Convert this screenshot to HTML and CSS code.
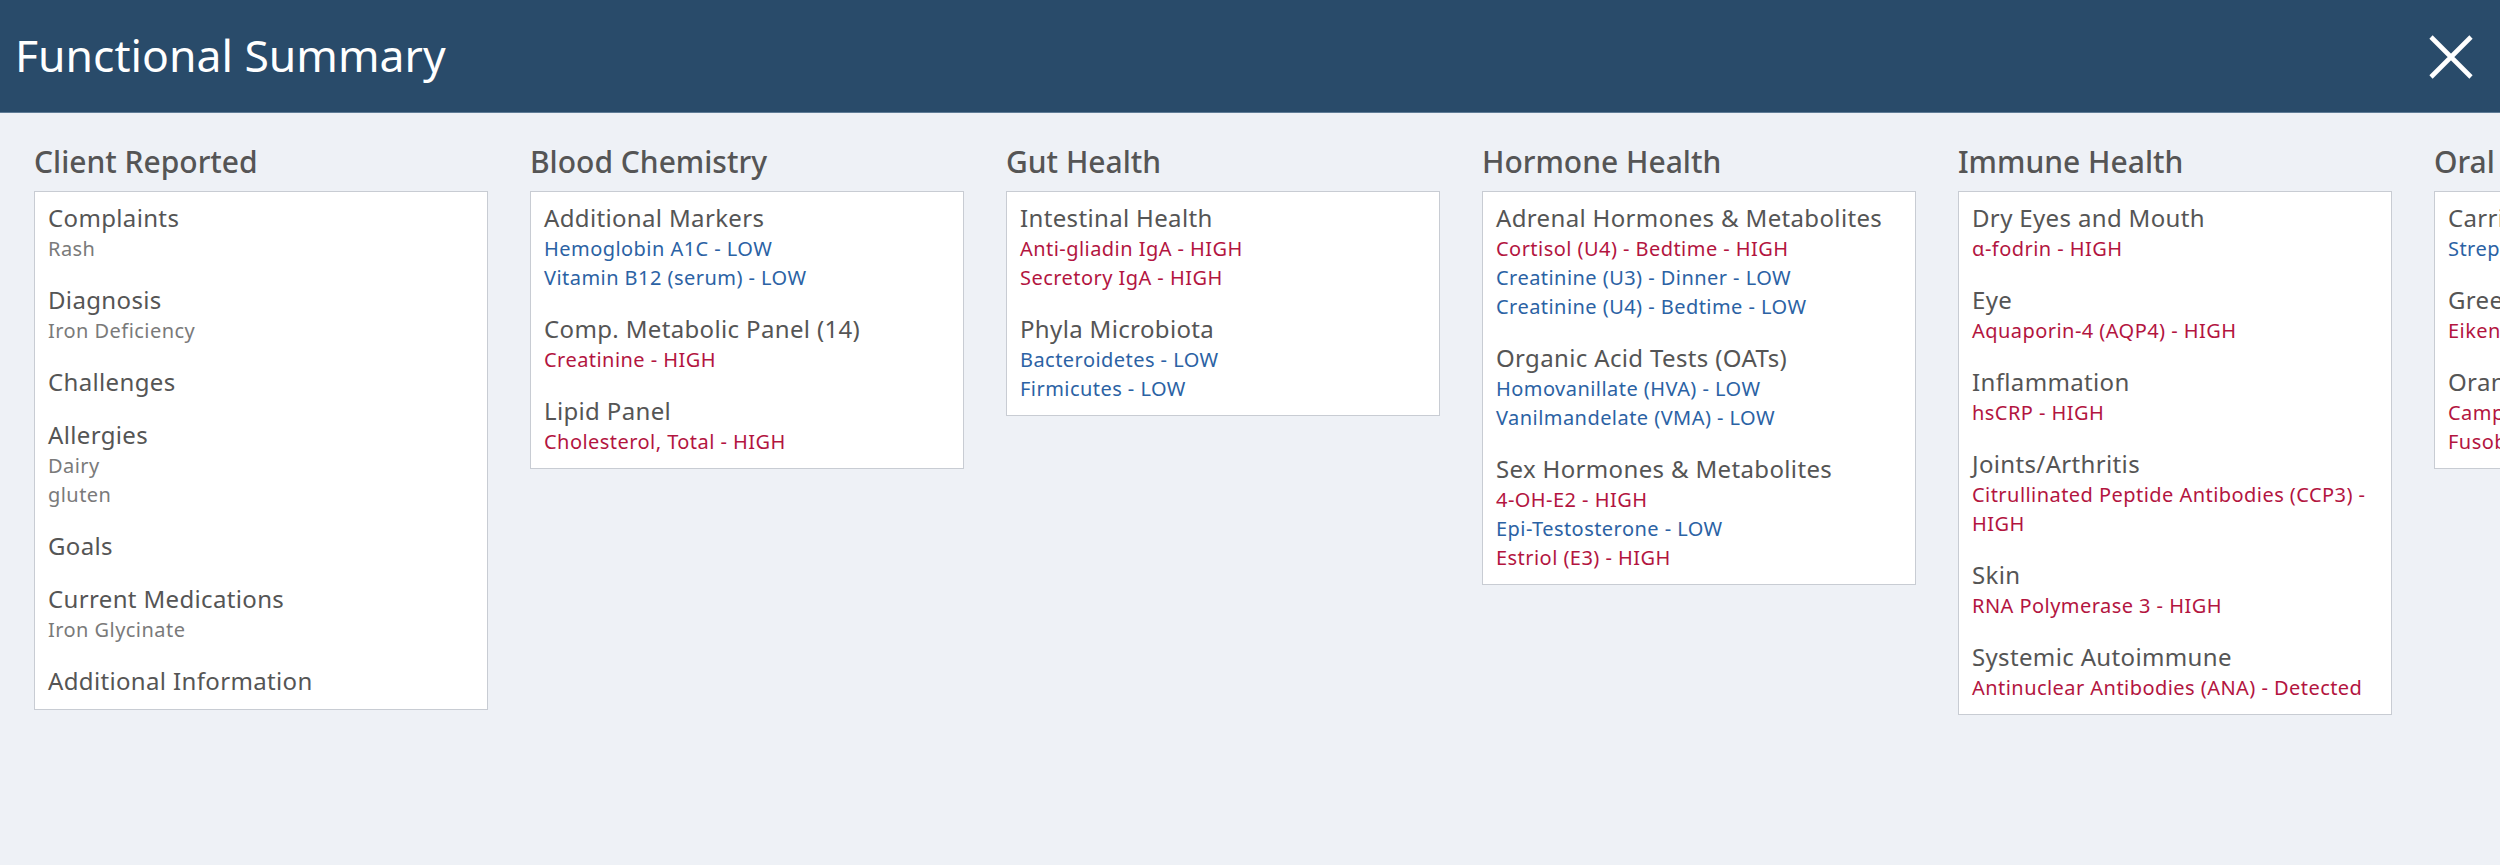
FILE: index.html
```html
<!DOCTYPE html>
<html>
<head>
<meta charset="utf-8">
<link rel="stylesheet" href="styles.css">
</head>
<body>
<header class="topbar">
  <h1 class="title">Functional Summary</h1>
  <button class="close" aria-label="Close">
    <svg width="46" height="46" viewBox="0 0 46 46"><path d="M3 3 L43 43 M43 3 L3 43" stroke="#fff" stroke-width="4.6" fill="none"/></svg>
  </button>
</header>
<main class="columns">
  <section class="col col-wide">
    <h2 class="col-title">Client Reported</h2>
    <div class="card">
      <div class="group"><div class="g-title">Complaints</div><div class="v muted">Rash</div></div>
      <div class="group"><div class="g-title">Diagnosis</div><div class="v muted">Iron Deficiency</div></div>
      <div class="group"><div class="g-title">Challenges</div></div>
      <div class="group"><div class="g-title">Allergies</div><div class="v muted">Dairy</div><div class="v muted">gluten</div></div>
      <div class="group"><div class="g-title">Goals</div></div>
      <div class="group"><div class="g-title">Current Medications</div><div class="v muted">Iron Glycinate</div></div>
      <div class="group"><div class="g-title">Additional Information</div></div>
    </div>
  </section>
  <section class="col">
    <h2 class="col-title">Blood Chemistry</h2>
    <div class="card">
      <div class="group"><div class="g-title">Additional Markers</div><div class="v low">Hemoglobin A1C - LOW</div><div class="v low">Vitamin B12 (serum) - LOW</div></div>
      <div class="group"><div class="g-title">Comp. Metabolic Panel (14)</div><div class="v high">Creatinine - HIGH</div></div>
      <div class="group"><div class="g-title">Lipid Panel</div><div class="v high">Cholesterol, Total - HIGH</div></div>
    </div>
  </section>
  <section class="col">
    <h2 class="col-title">Gut Health</h2>
    <div class="card">
      <div class="group"><div class="g-title">Intestinal Health</div><div class="v high">Anti-gliadin IgA - HIGH</div><div class="v high">Secretory IgA - HIGH</div></div>
      <div class="group"><div class="g-title">Phyla Microbiota</div><div class="v low">Bacteroidetes - LOW</div><div class="v low">Firmicutes - LOW</div></div>
    </div>
  </section>
  <section class="col">
    <h2 class="col-title">Hormone Health</h2>
    <div class="card">
      <div class="group"><div class="g-title">Adrenal Hormones &amp; Metabolites</div><div class="v high">Cortisol (U4) - Bedtime - HIGH</div><div class="v low">Creatinine (U3) - Dinner - LOW</div><div class="v low">Creatinine (U4) - Bedtime - LOW</div></div>
      <div class="group"><div class="g-title">Organic Acid Tests (OATs)</div><div class="v low">Homovanillate (HVA) - LOW</div><div class="v low">Vanilmandelate (VMA) - LOW</div></div>
      <div class="group"><div class="g-title">Sex Hormones &amp; Metabolites</div><div class="v high">4-OH-E2 - HIGH</div><div class="v low">Epi-Testosterone - LOW</div><div class="v high">Estriol (E3) - HIGH</div></div>
    </div>
  </section>
  <section class="col">
    <h2 class="col-title">Immune Health</h2>
    <div class="card">
      <div class="group"><div class="g-title">Dry Eyes and Mouth</div><div class="v high">α-fodrin - HIGH</div></div>
      <div class="group"><div class="g-title">Eye</div><div class="v high">Aquaporin-4 (AQP4) - HIGH</div></div>
      <div class="group"><div class="g-title">Inflammation</div><div class="v high">hsCRP - HIGH</div></div>
      <div class="group"><div class="g-title">Joints/Arthritis</div><div class="v high">Citrullinated Peptide Antibodies (CCP3) - HIGH</div></div>
      <div class="group"><div class="g-title">Skin</div><div class="v high">RNA Polymerase 3 - HIGH</div></div>
      <div class="group"><div class="g-title">Systemic Autoimmune</div><div class="v high">Antinuclear Antibodies (ANA) - Detected</div></div>
    </div>
  </section>
  <section class="col">
    <h2 class="col-title">Oral Health</h2>
    <div class="card">
      <div class="group"><div class="g-title">Carries Risk</div><div class="v low">Streptococcus mutans - LOW</div></div>
      <div class="group"><div class="g-title">Green Complex</div><div class="v high">Eikenella corrodens - HIGH</div></div>
      <div class="group"><div class="g-title">Orange Complex</div><div class="v high">Campylobacter rectus - HIGH</div><div class="v high">Fusobacterium nucleatum - HIGH</div></div>
    </div>
  </section>
</main>
</body>
</html>
```
FILE: styles.css
```css
html, body {
  margin: 0;
  padding: 0;
  overflow: hidden;
  height: 100%;
}
body {
  background: #eef1f6;
  font-family: "Noto Sans", "Open Sans", sans-serif;
  color: #555;
}
.topbar {
  height: 112px;
  background: #294b6a;
  border-bottom: 1px solid #5f7c96;
  display: flex;
  align-items: center;
  justify-content: space-between;
  padding: 0 0 0 15px;
}
.title {
  margin: 0;
  font-weight: 400;
  font-size: 44.5px;
  color: #fff;
  line-height: 1;
  padding-bottom: 2px;
}
.close {
  background: none;
  border: 0;
  padding: 0;
  margin-right: 26px;
  margin-top: 2px;
  width: 46px;
  height: 46px;
  display: flex;
}
.columns {
  display: flex;
  align-items: flex-start;
  gap: 42px;
  padding: 31px 0 0 34px;
  width: max-content;
}
.col {
  width: 434px;
  flex: none;
}
.col-wide {
  width: 454px;
}
.col-title {
  margin: 0 0 12px 0;
  font-size: 30px;
  font-weight: 500;
  letter-spacing: 0;
  line-height: 35px;
  color: #555;
  white-space: nowrap;
}
.card {
  background: #fff;
  border: 1px solid #c8ccd3;
  padding: 10px 13px 12px 13px;
  display: flex;
  flex-direction: column;
  gap: 21px;
}
.g-title {
  font-size: 24px;
  letter-spacing: 0.35px;
  line-height: 32px;
  color: #555;
  white-space: nowrap;
}
.v {
  font-size: 20px;
  letter-spacing: 0.45px;
  line-height: 29px;
}
.muted { color: #7a7a7a; }
.low { color: #2b62a4; }
.high { color: #b3153f; }
```
